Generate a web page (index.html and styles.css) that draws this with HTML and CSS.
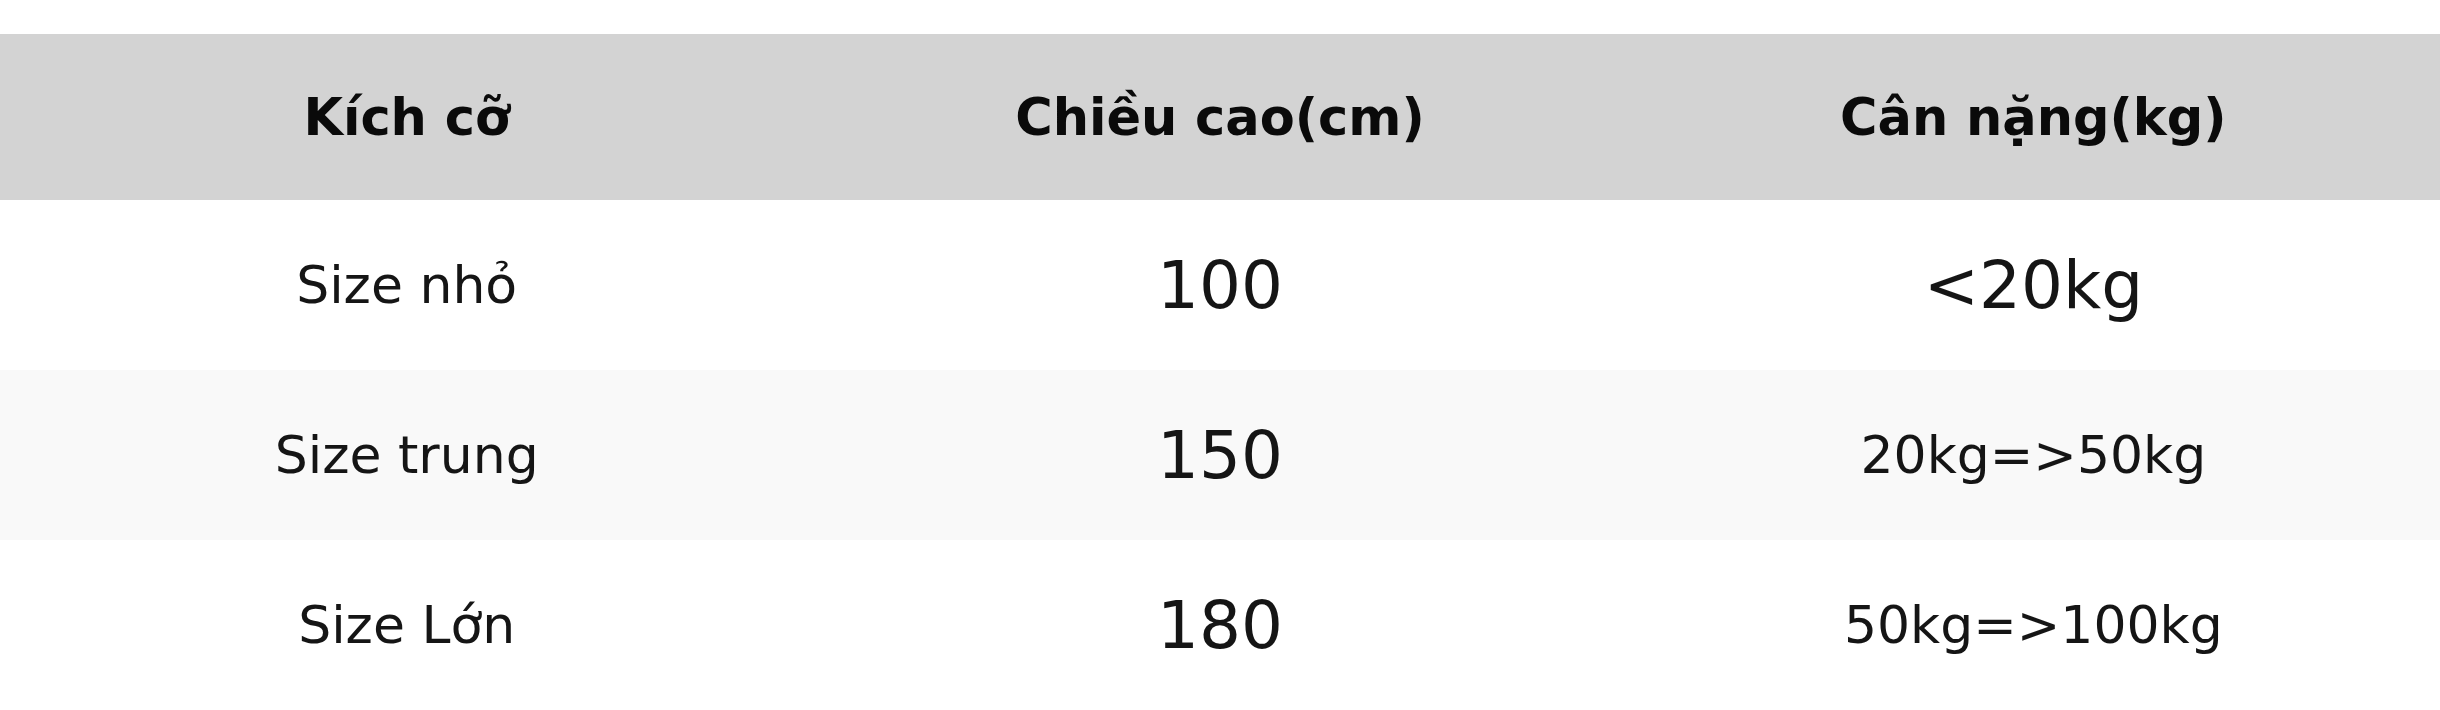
FILE: index.html
```html
<!DOCTYPE html>
<html lang="vi">
<head>
<meta charset="utf-8">
<title>Bảng size</title>
<link rel="stylesheet" href="styles.css">
</head>
<body>
<table class="size-table">
  <thead>
    <tr class="head-row">
      <th>Kích cỡ</th>
      <th>Chiều cao(cm)</th>
      <th>Cân nặng(kg)</th>
    </tr>
  </thead>
  <tbody>
    <tr class="row">
      <td>Size nhỏ</td>
      <td class="big">100</td>
      <td class="big">&lt;20kg</td>
    </tr>
    <tr class="row alt">
      <td>Size trung</td>
      <td class="big">150</td>
      <td>20kg=&gt;50kg</td>
    </tr>
    <tr class="row">
      <td>Size Lớn</td>
      <td class="big">180</td>
      <td>50kg=&gt;100kg</td>
    </tr>
  </tbody>
</table>
</body>
</html>
```
FILE: styles.css
```css
html, body {
  margin: 0;
  padding: 0;
  background: #ffffff;
}
body {
  padding-top: 34px;
  font-family: "DejaVu Sans", Verdana, sans-serif;
  color: #151515;
}
.size-table {
  width: 100%;
  border-collapse: collapse;
  table-layout: fixed;
}
.size-table th,
.size-table td {
  text-align: center;
  vertical-align: middle;
  padding: 0;
}
.head-row {
  background: #d3d3d3;
  height: 166px;
}
.head-row th {
  font-size: 51px;
  font-weight: bold;
  color: #0a0a0a;
}
.row {
  height: 170px;
}
.row td {
  font-size: 52px;
}
.row td.big {
  font-size: 66px;
}
.row.alt {
  background: #f9f9f9;
}
```
